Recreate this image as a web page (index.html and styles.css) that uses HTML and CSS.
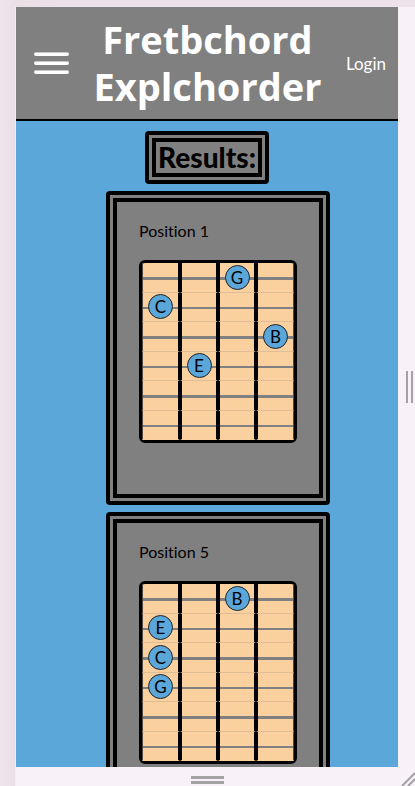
FILE: index.html
```html
<!DOCTYPE html>
<html lang="en">
<head>
<meta charset="utf-8">
<meta name="viewport" content="width=device-width, initial-scale=1">
<title>Fretbchord Explchorder</title>
<link rel="stylesheet" href="styles.css">
</head>
<body>
<div class="frame">
  <div class="screen">
    <header class="header">
      <button class="menu" type="button" aria-label="Menu"><span class="bar"></span><span class="bar"></span><span class="bar"></span></button>
      <h1 class="title">Fretbchord Explchorder</h1>
      <a class="login" href="#">Login</a>
    </header>
    <main class="results">
      <h2 class="heading">Results:</h2>
      <section class="card">
        <h3 class="position">Position 1</h3>
        <div class="board">
          <div class="fret"></div><div class="fret"></div><div class="fret"><span class="note">G</span></div><div class="fret"></div>
          <div class="fret"><span class="note">C</span></div><div class="fret"></div><div class="fret"></div><div class="fret"></div>
          <div class="fret"></div><div class="fret"></div><div class="fret"></div><div class="fret"><span class="note">B</span></div>
          <div class="fret"></div><div class="fret"><span class="note">E</span></div><div class="fret"></div><div class="fret"></div>
          <div class="fret"></div><div class="fret"></div><div class="fret"></div><div class="fret"></div>
          <div class="fret"></div><div class="fret"></div><div class="fret"></div><div class="fret"></div>
        </div>
      </section>
      <section class="card">
        <h3 class="position">Position 5</h3>
        <div class="board">
          <div class="fret"></div><div class="fret"></div><div class="fret"><span class="note">B</span></div><div class="fret"></div>
          <div class="fret"><span class="note">E</span></div><div class="fret"></div><div class="fret"></div><div class="fret"></div>
          <div class="fret"><span class="note">C</span></div><div class="fret"></div><div class="fret"></div><div class="fret"></div>
          <div class="fret"><span class="note">G</span></div><div class="fret"></div><div class="fret"></div><div class="fret"></div>
          <div class="fret"></div><div class="fret"></div><div class="fret"></div><div class="fret"></div>
          <div class="fret"></div><div class="fret"></div><div class="fret"></div><div class="fret"></div>
        </div>
      </section>
    </main>
  </div>
  <div class="grip grip-side"></div>
  <div class="grip grip-bottom"></div>
  <svg class="corner" viewBox="0 0 17 19" aria-hidden="true"><path d="M4 19 17 6M10 19l7-7" fill="none" stroke="#a3a3a3" stroke-width="2"/></svg>
</div>
</body>
</html>
```

FILE: styles.css
```css
* {
  box-sizing: border-box;
}

body {
  margin: 0;
  padding: 7px 0 0 15px;
  height: 100vh;
  overflow: hidden;
  background: linear-gradient(to right, #f0e5ec, #ebdfe6 15px, #eee2ea 60px);
  font-family: "Gill Sans", "Gill Sans MT", Lato, sans-serif;
  font-variant-ligatures: none;
  color: #000;
}

.frame {
  display: grid;
  grid-template-columns: minmax(0, 1fr) 17px;
  grid-template-rows: minmax(0, 1fr) 19px;
  height: 100%;
  background: #f8f1f8;
  border-left: 1px solid #f4edf3;
}

.screen {
  overflow: hidden;
  background: #5ba7da;
}

.header {
  display: flex;
  align-items: center;
  justify-content: space-between;
  padding: 9px 12px 9px 18px;
  background: #808080;
  border-bottom: 2px solid #000;
  color: #fff;
}

.menu {
  display: flex;
  flex: none;
  flex-direction: column;
  gap: 5px;
  width: 35px;
  padding: 0;
  border: 0;
  background: none;
}

.bar {
  height: 4px;
  border: 1px solid #c8c8c8;
  border-width: 1px 0 0;
  border-radius: 2px;
  background: #fff;
}

.title {
  width: 240px;
  margin: 0;
  font-family: "Gill Sans", "Gill Sans MT", "Open Sans", sans-serif;
  font-size: 38px;
  font-weight: 700;
  line-height: 47px;
  text-align: center;
}

.login {
  color: inherit;
  font-size: 17px;
  text-decoration: none;
}

.results {
  display: flex;
  flex-direction: column;
  align-items: center;
  gap: 7px;
  padding-top: 10px;
}

.heading {
  margin: 0;
  padding: 0 2px;
  border: 11px double #000;
  border-radius: 4px;
  background: #808080;
  font-size: 28px;
  font-weight: 900;
  line-height: 31px;
}

.card {
  width: 224px;
  height: 314px;
  margin-left: 22px;
  padding: 18px 22px;
  border: 11px double #000;
  border-radius: 4px;
  background: #808080;
}

.position {
  margin: 0 0 18px;
  font-size: 16px;
  font-weight: 400;
  line-height: 22px;
}

.board {
  display: grid;
  grid-template-columns: repeat(4, 1fr);
  grid-template-rows: repeat(6, 1fr);
  width: 158px;
  height: 183px;
  border: 3px solid #000;
  border-radius: 6px;
  background: #fbd09f;
}

.fret {
  display: flex;
  align-items: center;
  justify-content: center;
  border-right: 2px solid #000;
  border-left: 2px solid #000;
  border-bottom: 1px solid #e0bd96;
  background: linear-gradient(#808080, #808080) center 56% / 100% 2px no-repeat;
}

.fret:nth-child(8n + 1),
.fret:nth-child(8n + 2),
.fret:nth-child(8n + 3),
.fret:nth-child(8n + 4) {
  background-size: 100% 3px;
}

.fret:nth-child(4n + 1) {
  border-left: 1px solid #54463a;
}

.fret:nth-child(4n) {
  border-right: 1px solid #54463a;
}

.fret:nth-last-child(-n + 4) {
  border-bottom-color: #fbd09f;
}

.note {
  flex: none;
  width: 25px;
  height: 25px;
  border: 1px solid #222;
  border-radius: 50%;
  background: #5ba7da;
  font-size: 17px;
  line-height: 23px;
  text-align: center;
}

.grip-side {
  align-self: center;
  justify-self: end;
  width: 7px;
  height: 32px;
  margin-right: 2px;
  border: solid #a3a3a3;
  border-width: 0 2px;
}

.grip-bottom {
  align-self: end;
  justify-self: center;
  width: 33px;
  height: 8px;
  margin-bottom: 2px;
  border: solid #a3a3a3;
  border-width: 3px 0;
}

.corner {
  width: 17px;
  height: 19px;
}
```
